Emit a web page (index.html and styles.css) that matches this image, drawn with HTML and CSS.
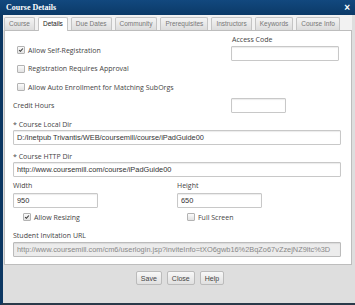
FILE: index.html
```html
<!DOCTYPE html>
<html lang="en">
<head>
  <meta charset="UTF-8">
  <title>Course Details</title>
  <link rel="stylesheet" href="styles.css">
</head>
<body>
  <div class="dialog">
    <div class="titlebar">
      <span class="title">Course Details</span>
      <span class="close">&#215;</span>
    </div>

    <!-- Onglets -->
    <div class="tabs">
      <span class="tab">Course</span>
      <span class="tab active">Details</span>
      <span class="tab">Due Dates</span>
      <span class="tab">Community</span>
      <span class="tab">Prerequisites</span>
      <span class="tab">Instructors</span>
      <span class="tab">Keywords</span>
      <span class="tab">Course Info</span>
    </div>

    <div class="panel">
      <div class="top">
        <div class="checks">
          <label class="check"><span class="box checked"><svg viewBox="0 0 8 8"><path d="M1.5 4.2 L3.2 5.8 L6.5 2" fill="none" stroke="#333" stroke-width="1.4"/></svg></span>Allow Self-Registration</label>
          <label class="check"><span class="box"></span>Registration Requires Approval</label>
          <label class="check"><span class="box"></span>Allow Auto Enrollment for Matching SubOrgs</label>
        </div>
        <div class="access">
          <div class="label">Access Code</div>
          <input type="text" class="field access-field">
        </div>
      </div>

      <div class="credit">
        <div class="label credit-label">Credit Hours</div>
        <input type="text" class="field credit-field">
      </div>

      <div class="label req">* Course Local Dir</div>
      <input type="text" class="field wide" value="D:/Inetpub Trivantis/WEB/coursemill/course/iPadGuide00">

      <div class="label req">* Course HTTP Dir</div>
      <input type="text" class="field wide" value="http://www.coursemill.com/course/iPadGuide00">

      <div class="size">
        <div class="size-col">
          <div class="label">Width</div>
          <input type="text" class="field small" value="950">
          <label class="check sub"><span class="box checked"><svg viewBox="0 0 8 8"><path d="M1.5 4.2 L3.2 5.8 L6.5 2" fill="none" stroke="#333" stroke-width="1.4"/></svg></span>Allow Resizing</label>
        </div>
        <div class="size-col">
          <div class="label">Height</div>
          <input type="text" class="field small" value="650">
          <label class="check sub"><span class="box"></span>Full Screen</label>
        </div>
      </div>

      <div class="label url-label">Student Invitation URL</div>
      <input type="text" class="field wide disabled" value="http://www.coursemill.com/cm6/userlogin.jsp?inviteInfo=tXO6gwb16%2BqZo67vZzejNZ9ltc%3D" readonly>
    </div>

    <div class="footer">
      <button type="button">Save</button>
      <button type="button">Close</button>
      <button type="button">Help</button>
    </div>
  </div>
</body>
</html>
```

FILE: styles.css
```css
body {
  margin: 0;
  font-family: "Open Sans", sans-serif;
  background: #ffffff;
}
.dialog {
  width: 355px;
  height: 305px;
  box-sizing: border-box;
  background: #dedede;
  border-left: 3px solid #0c3762;
  border-bottom: 2px solid #2a3a4a;
}
.titlebar {
  height: 15px;
  background: linear-gradient(#12487e, #0b3a68);
  color: white;
  display: flex;
  align-items: center;
  justify-content: space-between;
  margin-left: -3px;
  padding: 0 5px 0 6px;
}
.title {
  font-family: "Liberation Serif", serif;
  font-weight: bold;
  font-size: 8px;
}
.close {
  font-family: "Liberation Sans", sans-serif;
  font-weight: bold;
  font-size: 10px;
  line-height: 10px;
}
.tabs {
  display: flex;
  gap: 3px;
  padding: 2px 0 0 1px;
  height: 13px;
  background: #f2f2f2;
  margin-right: 3px;
}
.tab {
  flex: none;
  white-space: nowrap;
  font-family: "Liberation Sans", sans-serif;
  font-size: 6.5px;
  color: #777;
  padding: 0 4px;
  height: 12px;
  line-height: 12px;
  border: 1px solid #c4c4c4;
  border-bottom: none;
  border-radius: 2px 2px 0 0;
  background: linear-gradient(#f4f4f4, #dcdcdc);
}
.tab.active {
  background: #ffffff;
  color: #222;
  height: 13px;
  margin-bottom: -1px;
  position: relative;
}
.panel {
  background: #ffffff;
  border: 1px solid #bdbdbd;
  margin: 0 3px 0 1px;
  height: 235px;
  box-sizing: border-box;
  padding: 0 10px 0 8px;
}
.label {
  font-size: 7px;
  color: #444;
  height: 10px;
  line-height: 10px;
}
.field {
  display: block;
  box-sizing: border-box;
  height: 15px;
  border: 1px solid #c8c8c8;
  border-radius: 1px;
  padding: 0 3px;
  font-family: "Liberation Sans", sans-serif;
  font-size: 7.4px;
  color: #333;
  background: #fff;
  box-shadow: inset 0 1px 1px rgba(0,0,0,0.08);
}
.top {
  display: flex;
}
.checks {
  width: 218px;
  padding-top: 13px;
}
.check {
  display: flex;
  align-items: center;
  height: 12px;
  margin-bottom: 6.5px;
  font-size: 7px;
  color: #444;
  padding-left: 4px;
}
.box {
  width: 6px;
  height: 6px;
  border: 1px solid #b3b3b3;
  border-radius: 1px;
  background: linear-gradient(#fbfbfb, #e2e2e2);
  margin-right: 3px;
  display: flex;
}
.box svg {
  width: 6px;
  height: 6px;
}
.access {
  padding-top: 4px;
}
.access .label {
  padding-left: 1px;
}
.access-field {
  width: 108px;
  margin-top: 1px;
}
.credit {
  display: flex;
  align-items: center;
  margin-top: -1.5px;
}
.credit-label {
  width: 218px;
}
.credit-field {
  width: 55px;
}
.req {
  margin-top: 7px;
}
.wide {
  width: 100%;
}
.size {
  display: flex;
  margin-top: 4px;
}
.size-col {
  width: 168px;
}
.small {
  width: 85px;
  margin-top: 2px;
}
.check.sub {
  padding-left: 10px;
  margin-top: 3px;
  margin-bottom: 0;
}
.url-label {
  margin-top: 8px;
}
.url-label + .field {
  margin-top: 1px;
}
.disabled {
  background: #ececec;
  color: #888;
  border-color: #bbb;
}
.footer {
  display: flex;
  justify-content: center;
  gap: 5px;
  padding-top: 6px;
  padding-left: 2px;
}
.footer button {
  font-family: "Liberation Sans", sans-serif;
  font-size: 7px;
  color: #444;
  height: 14px;
  padding: 0 4px;
  border: 1px solid #bbb;
  border-radius: 2px;
  background: linear-gradient(#f8f8f8, #e0e0e0);
}
```
